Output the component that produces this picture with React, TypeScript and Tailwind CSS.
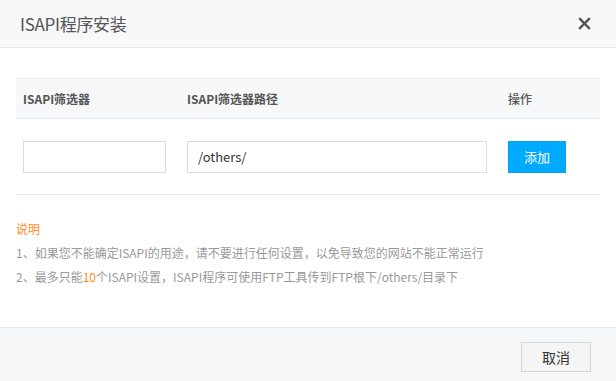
import React from "react";

const font = { fontFamily: '"Microsoft YaHei", "Noto Sans CJK SC", sans-serif' };

export default function App() {
  return (
    <div
      className="w-[616px] h-[381px] bg-white flex flex-col text-[#555]"
      style={font}
    >
      <div className="h-[48px] shrink-0 bg-[#f7f8fa] border-b border-[#e8e8e8] flex items-center justify-between pl-[20px] pr-[25px]">
        <span className="text-[17px] text-[#555] leading-none tracking-[-0.3px]">ISAPI程序安装</span>
        <svg width="13" height="13" viewBox="0 0 13 13" className="text-[#555]">
          <path d="M1.2 1.2 L11.8 11.8 M11.8 1.2 L1.2 11.8" stroke="currentColor" strokeWidth="2.4" strokeLinecap="butt" />
        </svg>
      </div>

      <div className="flex-1 px-[16px] pt-[30px] flex flex-col">
        <div className="grid grid-cols-[164px_321px_1fr] h-[41px] bg-[#f7f8fa] border-y border-[#eaeaea] items-center text-[12px] text-[#555]">
          <div className="px-[7px] font-bold">ISAPI筛选器</div>
          <div className="px-[7px] font-bold">ISAPI筛选器路径</div>
          <div className="px-[7px] font-medium">操作</div>
        </div>
        <div className="grid grid-cols-[164px_321px_1fr] h-[76px] border-b border-[#eaeaea] items-center">
          <div className="px-[7px]">
            <input className="w-[143px] h-[32px] border border-[#dcdcdc] outline-none px-[10px] text-[13px]" />
          </div>
          <div className="px-[7px]">
            <input
              className="w-[300px] h-[32px] border border-[#dcdcdc] outline-none px-[10px] text-[13px] text-[#333]"
              defaultValue="/others/"
              style={font}
            />
          </div>
          <div className="px-[7px]">
            <button className="w-[58px] h-[32px] bg-[#00aaff] text-white text-[13px] border border-[#0aa0ee]">
              添加
            </button>
          </div>
        </div>

        <div className="mt-[22px] text-[12px] leading-[24px] text-[#999]">
          <div className="text-[#ff8a1f]">说明</div>
          <div>1、如果您不能确定ISAPI的用途，请不要进行任何设置，以免导致您的网站不能正常运行</div>
          <div>
            2、最多只能<span className="text-[#ff8a1f]">10</span>个ISAPI设置，ISAPI程序可使用FTP工具传到FTP根下/others/目录下
          </div>
        </div>
      </div>

      <div className="h-[54px] shrink-0 bg-[#f5f7f9] border-t border-[#e6e6e6] flex items-start justify-end pt-[14px] pr-[25px]">
        <button className="w-[70px] h-[30px] bg-[#f5f5f5] border border-[#d5d5d5] text-[14px] text-[#333]">
          取消
        </button>
      </div>
    </div>
  );
}
